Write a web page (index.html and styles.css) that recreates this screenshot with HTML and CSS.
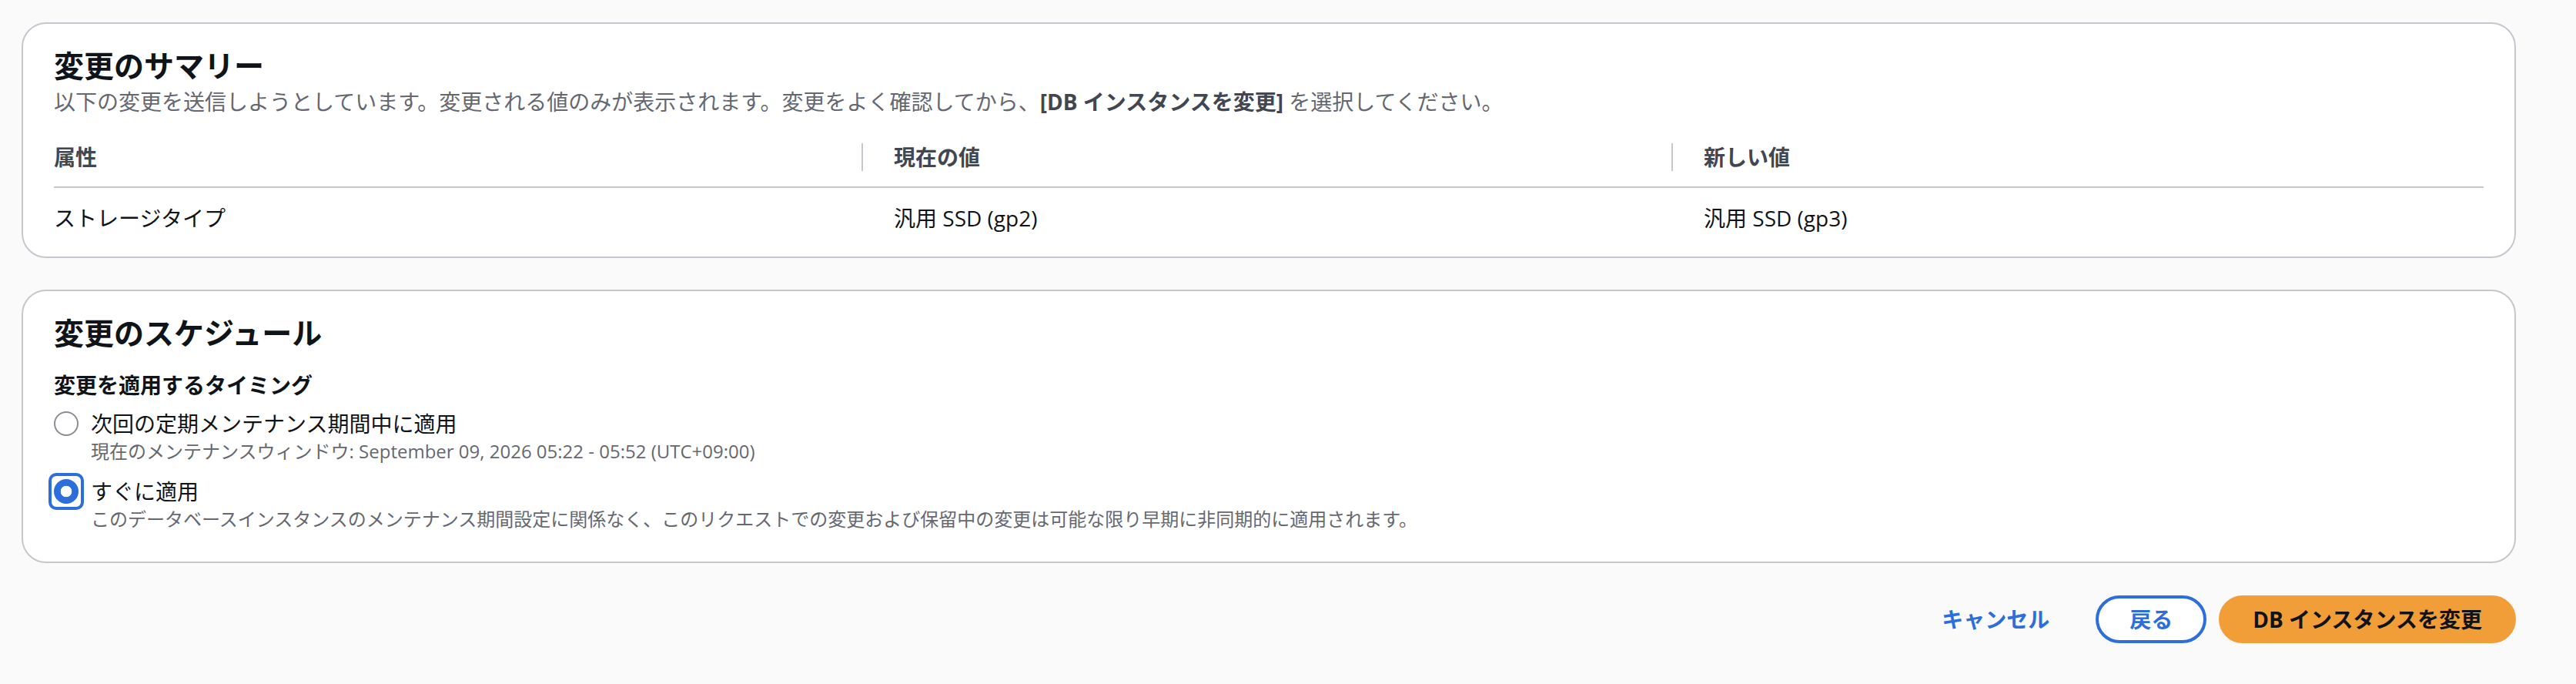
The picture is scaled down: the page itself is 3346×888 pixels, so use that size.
FILE: index.html
```html
<!DOCTYPE html>
<html lang="ja">
<head>
<meta charset="utf-8">
<title>変更のサマリー</title>
<link rel="stylesheet" href="styles.css">
</head>
<body>
<div class="page">
  <section class="card card-summary">
    <header class="card-header">
      <h2 class="card-title">変更のサマリー</h2>
      <p class="card-desc">以下の変更を送信しようとしています。変更される値のみが表示されます。変更をよく確認してから、<strong>[DB インスタンスを変更]</strong> を選択してください。</p>
    </header>
    <div class="table">
      <div class="th th-first">属性</div>
      <div class="th"><span class="sep"></span><span class="th-text">現在の値</span></div>
      <div class="th"><span class="sep"></span><span class="th-text">新しい値</span></div>
      <div class="td td-first">ストレージタイプ</div>
      <div class="td">汎用 SSD (gp2)</div>
      <div class="td">汎用 SSD (gp3)</div>
    </div>
  </section>

  <section class="card card-schedule">
    <header class="card-header">
      <h2 class="card-title">変更のスケジュール</h2>
    </header>
    <div class="field-label">変更を適用するタイミング</div>
    <div class="radio-group">
      <div class="radio">
        <span class="radio-control"></span>
        <span class="radio-label">次回の定期メンテナンス期間中に適用</span>
        <span class="radio-desc">現在のメンテナンスウィンドウ: September 09, 2026 05:22 - 05:52 (UTC+09:00)</span>
      </div>
      <div class="radio">
        <span class="radio-control checked focused"></span>
        <span class="radio-label">すぐに適用</span>
        <span class="radio-desc">このデータベースインスタンスのメンテナンス期間設定に関係なく、このリクエストでの変更および保留中の変更は可能な限り早期に非同期的に適用されます。</span>
      </div>
    </div>
  </section>

  <div class="actions">
    <button class="btn btn-link">キャンセル</button>
    <button class="btn btn-normal">戻る</button>
    <button class="btn btn-primary">DB インスタンスを変更</button>
  </div>
</div>
</body>
</html>
```

FILE: styles.css
```css
* { box-sizing: border-box; }

html, body {
  margin: 0;
  padding: 0;
  background: #fafafa;
}

body {
  font-family: "Open Sans", "Noto Sans CJK JP", sans-serif;
  font-size: 28px;
  line-height: 40px;
  color: #0f141a;
}

.page {
  display: flex;
  flex-direction: column;
  gap: 41px;
  padding: 29px 78px 0 28px;
}

.card {
  background: #ffffff;
  border: 2px solid #c6c6cd;
  border-radius: 32px;
  padding: 30px 40px 40px;
}

.card-summary { padding-bottom: 10px; }
.card-schedule { padding-bottom: 39px; }

.card-title {
  margin: 0;
  font-size: 39px;
  line-height: 48px;
  font-weight: 700;
  color: #0f141a;
}

.card-desc {
  margin: 3px 0 0;
  font-size: 28px;
  line-height: 40px;
  color: #656871;
}

.card-desc strong {
  font-weight: 700;
  color: #424650;
}

.table {
  margin-top: 16px;
  display: grid;
  grid-template-columns: 1049fr 1052fr 1055fr;
}

.th {
  display: flex;
  align-items: center;
  padding: 16px 0 18px;
  border-bottom: 2px solid #c6c6cd;
  font-weight: 700;
  color: #424650;
}

.sep {
  width: 2px;
  height: 36px;
  background: #c6c6cd;
  flex: none;
}

.th-text { padding-left: 40px; }

.td {
  padding: 19px 0 20px 42px;
  color: #0f141a;
}

.td-first { padding-left: 0; }

.field-label {
  margin-top: 24px;
  font-weight: 700;
  color: #0f141a;
}

.radio-group {
  margin-top: 10px;
  display: flex;
  flex-direction: column;
  gap: 16px;
}

.radio {
  display: grid;
  grid-template-columns: 32px 1fr;
  column-gap: 16px;
  align-items: center;
}

.radio-control {
  position: relative;
  width: 32px;
  height: 32px;
  border-radius: 50%;
  border: 2px solid #8c8c94;
  background: #fff;
}

.radio-control.checked {
  border-color: #2c6edc;
  background: radial-gradient(circle, #ffffff 0 7px, #2c6edc 7.6px);
}

.radio-control.focused::after {
  content: "";
  position: absolute;
  left: -9px;
  right: -9px;
  top: -10px;
  bottom: -10px;
  border: 4px solid #2c6edc;
  border-radius: 10px;
}

.radio-label {
  color: #0f141a;
}

.radio-desc {
  grid-column: 2;
  font-size: 24px;
  line-height: 32px;
  color: #656871;
}

.actions {
  display: flex;
  justify-content: flex-end;
  gap: 16px;
  margin-top: 1px;
}

.btn {
  font-family: inherit;
  font-size: 28px;
  line-height: 40px;
  font-weight: 700;
  padding: 7px 40px;
  border: 4px solid transparent;
  border-radius: 40px;
  background: transparent;
  cursor: pointer;
}

.btn-link {
  color: #2c6edc;
}

.btn-normal {
  color: #2c6edc;
  border-color: #2c6edc;
  background: #ffffff;
}

.btn-primary {
  color: #0f141a;
  background: #f29e38;
  border-color: #f29e38;
}
```
